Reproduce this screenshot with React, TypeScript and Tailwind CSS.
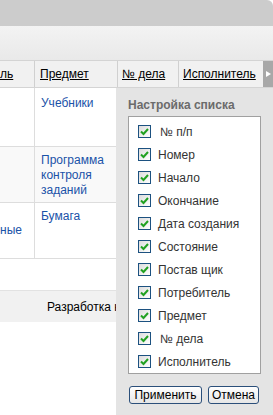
import React, { useState } from 'react';

const COLUMNS = [
  '№ п/п',
  'Номер',
  'Начало',
  'Окончание',
  'Дата создания',
  'Состояние',
  'Постав щик',
  'Потребитель',
  'Предмет',
  '№ дела',
  'Исполнитель',
];

const Check: React.FC<{ on: boolean; onClick: () => void }> = ({ on, onClick }) => (
  <span
    onClick={onClick}
    className="w-[13px] h-[13px] shrink-0 border border-[#1c5180] bg-gradient-to-br from-[#dcdcdc] to-white flex items-center justify-center cursor-pointer"
  >
    {on && (
      <svg width="9" height="8" viewBox="0 0 9 8">
        <path d="M1 3.5 L3.5 6 L8 1" fill="none" stroke="#21a121" strokeWidth="2" />
      </svg>
    )}
  </span>
);

const App: React.FC = () => {
  const [checked, setChecked] = useState<boolean[]>(COLUMNS.map(() => true));

  const toggle = (i: number) =>
    setChecked(prev => prev.map((v, j) => (j === i ? !v : v)));

  return (
    <div className="relative w-[273px] h-[415px] overflow-hidden bg-white text-[12px] text-black font-['Liberation_Sans',Arial,sans-serif]">
      {/* верхняя полоса */}
      <div className="h-[26px] bg-[#cccccc] rounded-tr-[6px]" />
      <div className="h-[35px] bg-gradient-to-b from-[#f3f3f3] to-[#e9e9e9] border-b border-[#d4d4d4]" />

      {/* шапка таблицы */}
      <div className="flex h-[27px] bg-[#f1f1f1] border-b border-[#d4d4d4]">
        <div className="w-[35px] border-r border-[#d0d0d0] flex items-center">
          <span className="underline">ль</span>
        </div>
        <div className="w-[83px] border-r border-[#d0d0d0] flex items-center pl-[5px]">
          <span className="underline">Предмет</span>
        </div>
        <div className="w-[61px] border-r border-[#d0d0d0] flex items-center pl-[4px]">
          <span className="underline">№ дела</span>
        </div>
        <div className="w-[84px] flex items-center pl-[4px]">
          <span className="underline">Исполнитель</span>
        </div>
        <div className="w-[10px] bg-[#a8a8a8] flex items-center justify-center">
          <svg width="5" height="6" viewBox="0 0 5 6">
            <path d="M0 0 L5 3 L0 6 Z" fill="#ffffff" />
          </svg>
        </div>
      </div>

      {/* строки */}
      <div className="flex h-[59px] border-b border-[#dddddd]">
        <div className="w-[35px] border-r border-[#dddddd]" />
        <div className="flex-1 pl-[6px] pt-[8px] leading-[15px] text-[#1a52a8]">Учебники</div>
      </div>
      <div className="flex h-[56px] border-b border-[#dddddd] bg-[#f9f9f9]">
        <div className="w-[35px] border-r border-[#dddddd]" />
        <div className="flex-1 pl-[6px] pt-[6px] leading-[15px] text-[#1a52a8]">
          Программа
          <br />
          контроля
          <br />
          заданий
        </div>
      </div>
      <div className="flex h-[56px] border-b border-[#dddddd]">
        <div className="w-[35px] border-r border-[#dddddd] flex items-center leading-[15px] text-[#1a52a8]">
          ные
        </div>
        <div className="flex-1 pl-[6px] pt-[6px] leading-[15px] text-[#1a52a8]">Бумага</div>
      </div>

      <div className="h-[31px]" />
      <div className="h-[32px] bg-[#f1f1f1] border-t border-[#e2e2e2] flex items-center pl-[47px] whitespace-nowrap">
        Разработка контроля
      </div>

      {/* окно настройки списка */}
      <div className="absolute left-[116px] top-[88px] right-0 bottom-0 bg-[#e4e4e4] px-[12px] pt-[10px]">
        <div className="font-bold text-[#6b6b6b] leading-[15px] whitespace-nowrap">Настройка списка</div>
        <div className="mt-[3px] w-[133px] bg-white border border-[#a0a0a0] pt-[3px] pl-[9px]">
          {COLUMNS.map((c, i) => (
            <label key={c} className="flex items-center h-[23px] gap-[7px] text-[#333333] whitespace-nowrap">
              <Check on={checked[i]} onClick={() => toggle(i)} />
              <span className={i === 0 || i === 9 ? 'pl-[2px]' : ''}>{c}</span>
            </label>
          ))}
        </div>
        <div className="flex gap-[6px] mt-[12px] pl-[1px]">
          <button className="h-[18px] w-[73px] border border-[#2b4f7a] rounded-[3px] bg-gradient-to-b from-white to-[#e6e6e6] leading-[14px] text-black">
            Применить
          </button>
          <button className="h-[18px] w-[51px] border border-[#2b4f7a] rounded-[3px] bg-gradient-to-b from-white to-[#e6e6e6] leading-[14px] text-black">
            Отмена
          </button>
        </div>
      </div>
    </div>
  );
};

export default App;
